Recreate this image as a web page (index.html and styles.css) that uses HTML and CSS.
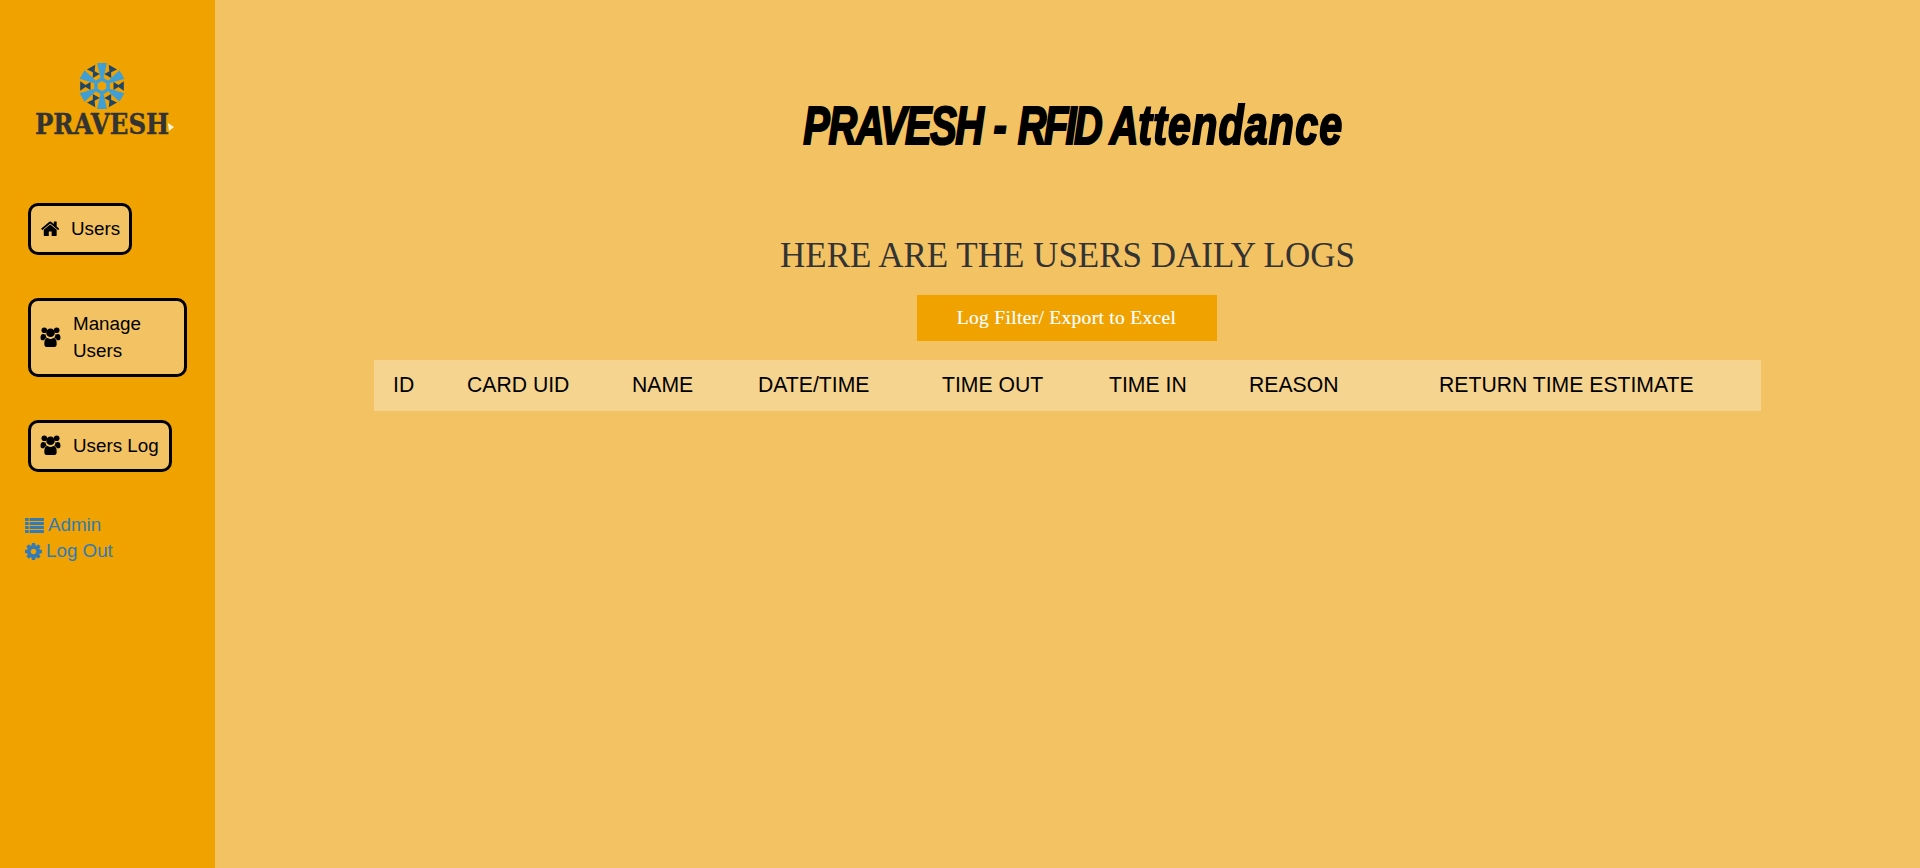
FILE: index.html
```html
<!DOCTYPE html>
<html lang="en">
  <head>
    <meta charset="UTF-8" />
    <meta name="viewport" content="width=device-width, initial-scale=1.0" />
    <title>PRAVESH - RFID Attendance</title>
    <link rel="stylesheet" href="styles.css">
  </head>
  <body>
    <svg class="icon-defs" width="0" height="0">
      <defs>
        <symbol id="icon-home" viewBox="-16 128 1696 1408">
          <path d="M1472 992v480q0 26-19 45t-45 19h-384v-384h-256v384h-384q-26 0-45-19t-19-45v-480q0-1 .5-3t.5-3l575-474 575 474q1 2 1 6zm223-69l-62 74q-8 9-21 11h-3q-13 0-21-7l-692-577-692 577q-12 8-24 7-13-2-21-11l-62-74q-8-10-7-23.500t11-21.500l719-599q32-26 76-26t76 26l244 204v-195q0-14 9-23t23-9h192q14 0 23 9t9 23v408l219 182q10 8 11 21.500t-7 23.500z"/>
        </symbol>
        <symbol id="icon-users" viewBox="0 0 1000 1000">
          <circle cx="190" cy="165" r="140"/>
          <circle cx="810" cy="165" r="140"/>
          <circle cx="500" cy="290" r="215"/>
          <path d="M0 540q0-190 130-190 60 25 125 18-10 95 55 165-110 25-130 127H70q-70 0-70-120zM1000 540q0-190-130-190-60 25-125 18 10 95-55 165 110 25 130 127h110q70 0 70-120zM190 840q0-290 170-290 65 55 140 55t140-55q170 0 170 290 0 160-120 160H310q-120 0-120-160z"/>
        </symbol>
        <symbol id="icon-list" viewBox="0 0 1000 800">
          <path d="M0 0h190v155H0zM240 0h760v155H240zM0 215h190v155H0zM240 215h760v155H240zM0 430h190v155H0zM240 430h760v155H240zM0 645h190v155H0zM240 645h760v155H240z"/>
        </symbol>
        <symbol id="icon-cog" viewBox="128 128 1536 1536">
          <path d="M1152 896q0-106-75-181t-181-75-181 75-75 181 75 181 181 75 181-75 75-181zm512-109v222q0 12-8 23t-20 13l-185 28q-19 54-39 91 35 50 107 138 10 12 10 25t-9 23q-27 37-99 108t-94 71q-12 0-26-9l-138-108q-44 23-91 38-16 136-29 186-7 28-36 28h-222q-14 0-24.500-8.500t-11.500-21.500l-28-184q-49-16-90-37l-141 107q-10 9-25 9-14 0-25-11-126-114-165-168-7-10-7-23 0-12 8-23 15-21 51-66.500t54-70.500q-27-50-41-99l-183-27q-13-2-21-12.500t-8-23.500v-222q0-12 8-23t19-13l186-28q14-46 39-92-40-57-107-138-10-12-10-24 0-10 9-23 26-36 98.500-107.500t94.500-71.500q13 0 26 10l138 107q44-23 91-38 16-136 29-186 7-28 36-28h222q14 0 24.500 8.500t11.500 21.500l28 184q49 16 90 37l142-107q9-9 24-9 13 0 25 10 129 119 165 170 7 8 7 22 0 12-8 23-15 21-51 66.500t-54 70.500q26 50 41 98l183 28q13 2 21 12.500t8 23.500z"/>
        </symbol>
        <polygon id="logo-arm" points="-5,-23 5,-23 1.500,-8 -1.500,-8" />
        <polygon id="logo-tie" points="11.500,-4 16.500,-1 21.800,-4.800 21.800,4.800 16.500,1 11.500,4" />
      </defs>
    </svg>

    <div class="page">
      <aside class="sidebar">
        <div class="logo">
          <svg class="logo-mark" viewBox="-24 -24 48 48" width="48" height="48">
            <g class="logo-arms">
              <use href="#logo-arm" />
              <use href="#logo-arm" transform="rotate(60)" />
              <use href="#logo-arm" transform="rotate(120)" />
              <use href="#logo-arm" transform="rotate(180)" />
              <use href="#logo-arm" transform="rotate(240)" />
              <use href="#logo-arm" transform="rotate(300)" />
              <polygon points="0,-9 7.800,-4.500 7.800,4.500 0,9 -7.800,4.500 -7.800,-4.500" />
            </g>
            <polygon class="logo-hole" points="0,-5 4.300,-2.500 4.300,2.500 0,5 -4.300,2.500 -4.300,-2.500" />
            <g class="logo-ties">
              <use href="#logo-tie" />
              <use href="#logo-tie" transform="rotate(60)" />
              <use href="#logo-tie" transform="rotate(120)" />
              <use href="#logo-tie" transform="rotate(180)" />
              <use href="#logo-tie" transform="rotate(240)" />
              <use href="#logo-tie" transform="rotate(300)" />
            </g>
          </svg>
          <span class="logo-name">PRAVESH</span>
          <svg class="logo-spark" viewBox="0 0 6 8" width="6" height="8"><polygon points="0,0 6,4 1,8" /></svg>
        </div>

        <nav class="side-nav">
          <a class="nav-btn nav-home" href="#">
            <svg class="nav-icon icon-home"><use href="#icon-home" /></svg>
            <span>Users</span>
          </a>
          <a class="nav-btn nav-manage" href="#">
            <svg class="nav-icon"><use href="#icon-users" /></svg>
            <span>Manage<br>Users</span>
          </a>
          <a class="nav-btn nav-log" href="#">
            <svg class="nav-icon"><use href="#icon-users" /></svg>
            <span>Users Log</span>
          </a>
        </nav>

        <div class="side-links">
          <a href="#"><svg class="link-icon link-list"><use href="#icon-list" /></svg>Admin</a>
          <a href="#"><svg class="link-icon link-cog"><use href="#icon-cog" /></svg>Log Out</a>
        </div>
      </aside>

      <main class="content">
        <h1 class="app-title"><span class="title-caps">PRAVESH</span> - <span class="title-rfid">RFID</span> A<span class="title-lower">ttendance</span></h1>
        <h2 class="logs-title">HERE ARE THE USERS DAILY LOGS</h2>
        <button class="filter-btn">Log Filter/ Export to Excel</button>
        <table class="logs-table">
          <thead>
            <tr>
              <th class="col-id">ID</th>
              <th class="col-uid">CARD UID</th>
              <th class="col-name">NAME</th>
              <th class="col-date">DATE/TIME</th>
              <th class="col-out">TIME OUT</th>
              <th class="col-in">TIME IN</th>
              <th class="col-reason">REASON</th>
              <th>RETURN TIME ESTIMATE</th>
            </tr>
          </thead>
          <tbody></tbody>
        </table>
      </main>
    </div>
  </body>
</html>
```

FILE: styles.css
```css
* {
  box-sizing: border-box;
}
body {
  margin: 0;
  font-family: "Liberation Sans", Arial, sans-serif;
  background-color: #f3c363;
}
.icon-defs {
  display: block;
  height: 0;
}
.page {
  display: flex;
  min-height: 868px;
}

/* sidebar */
.sidebar {
  width: 215px;
  flex-shrink: 0;
  background-color: #efa200;
  padding: 62px 0 0 28px;
}
.logo {
  position: relative;
  width: 148px;
  margin-left: 7px;
  display: flex;
  flex-direction: column;
  align-items: flex-start;
}
.logo-mark {
  margin-left: 43px;
  display: block;
}
.logo-arms {
  fill: #3f9fd4;
}
.logo-hole {
  fill: #efa200;
}
.logo-ties {
  fill: #1f4568;
}
.logo-name {
  font-family: "DejaVu Serif", serif;
  font-weight: bold;
  font-size: 27px;
  line-height: 24px;
  color: #333;
  margin-top: 3px;
  transform: scaleX(0.905);
  transform-origin: left center;
  -webkit-text-stroke: 0.4px #333;
}
.logo-spark {
  position: absolute;
  left: 133px;
  top: 61px;
  fill: #fff4dc;
}
.side-nav {
  margin-top: 66px;
  display: flex;
  flex-direction: column;
  align-items: flex-start;
  gap: 43px;
}
.nav-btn {
  display: flex;
  align-items: center;
  gap: 12px;
  padding: 0 9px 2px;
  background-color: #f3c363;
  border: 3px solid #000;
  border-radius: 10px;
  color: #000;
  text-decoration: none;
  font-size: 18.8px;
  line-height: 27px;
}
.nav-home {
  width: 104px;
  height: 52px;
}
.nav-manage {
  width: 159px;
  height: 79px;
}
.nav-log {
  width: 144px;
  height: 52px;
}
.nav-icon {
  width: 21px;
  height: 20px;
  flex-shrink: 0;
  fill: #000;
}
.icon-home {
  width: 19px;
  height: 16px;
}
.side-links {
  margin: 40px 0 0 -3px;
  display: flex;
  flex-direction: column;
  font-size: 18.8px;
  line-height: 26px;
}
.side-links a {
  display: flex;
  align-items: center;
  color: #337ab7;
  text-decoration: none;
}
.link-icon {
  flex-shrink: 0;
  fill: #337ab7;
}
.link-list {
  width: 19px;
  height: 15px;
  margin-right: 4px;
}
.link-cog {
  width: 17px;
  height: 17px;
  margin-right: 4px;
}

/* main column */
.content {
  flex: 1;
  display: flex;
  flex-direction: column;
  align-items: center;
  padding: 92px 159px 0;
}
.app-title {
  margin: 0 0 0 12px;
  font-family: "Liberation Sans", sans-serif;
  font-style: italic;
  font-weight: bold;
  font-size: 54px;
  line-height: 66px;
  color: #000;
  white-space: nowrap;
  transform: scaleX(0.735);
  -webkit-text-stroke: 2.2px #000;
}
/* no Impact here, so the word widths are pulled closer to it */
.title-caps {
  letter-spacing: -1.9px;
}
.title-rfid {
  letter-spacing: -3.5px;
}
.title-lower {
  font-size: 56px;
  letter-spacing: 1.600px;
}
.logs-title {
  margin: 78px 0 0;
  font-family: "Liberation Serif", "Times New Roman", serif;
  font-weight: normal;
  font-size: 35px;
  line-height: 40px;
  color: #333;
}
.filter-btn {
  width: 300px;
  height: 46px;
  margin: 19px 2px 0 0;
  border: none;
  background-color: #efa200;
  color: #fff;
  font-family: "Liberation Serif", serif;
  font-size: 19.500px;
  letter-spacing: 0.3px;
  -webkit-text-stroke: 0.2px #fff;
}
.logs-table {
  width: 100%;
  margin-top: 19px;
  border-collapse: collapse;
  table-layout: fixed;
}
.logs-table th {
  height: 51px;
  padding: 0 0 2px 19px;
  background-color: #f5d48f;
  color: #000;
  font-size: 21.200px;
  font-weight: normal;
  text-align: left;
  white-space: nowrap;
}
.col-id { width: 74px; }
.col-uid { width: 165px; }
.col-name { width: 126px; }
.col-date { width: 184px; }
.col-out { width: 167px; }
.col-in { width: 140px; }
.col-reason { width: 190px; }
```
